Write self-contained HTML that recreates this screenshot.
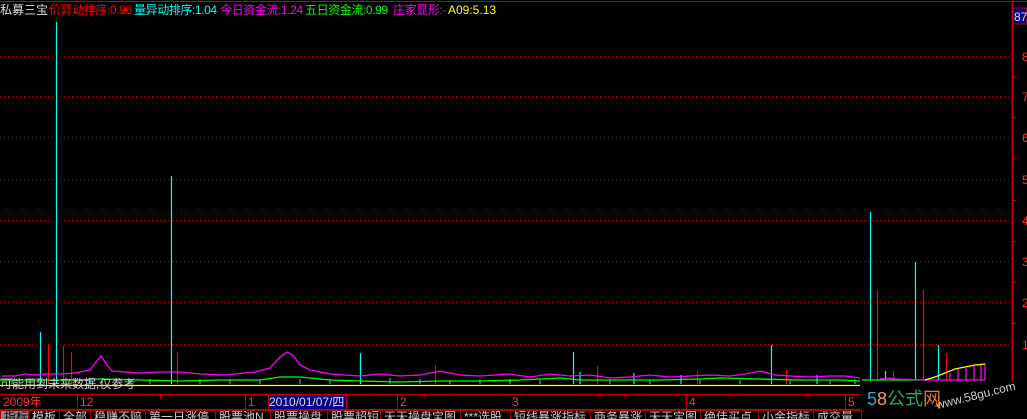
<!DOCTYPE html>
<html><head><meta charset="utf-8"><style>
body{margin:0;width:1027px;height:416px;background:#000;overflow:hidden;position:relative;font-family:"Liberation Sans","Noto Sans CJK SC",sans-serif}
.t{position:absolute;font-size:12px;white-space:nowrap;line-height:14px}
.tab{position:absolute;top:410px;height:8px;border-left:1px solid #a00;border-top:1px solid #a00;color:#ccc;font-size:12px;line-height:13px;padding-left:3px;overflow:hidden;white-space:nowrap}
</style></head><body>
<svg width="1027" height="416" style="position:absolute;left:0;top:0">
<line x1="0" y1="1.5" x2="1027" y2="1.5" stroke="#c00" stroke-width="1"/>
<g stroke="#c00" stroke-dasharray="1,3">
<line x1="0" y1="56.5" x2="1012" y2="56.5"/><line x1="0" y1="96.5" x2="1012" y2="96.5"/>
<line x1="0" y1="137.5" x2="1012" y2="137.5"/><line x1="0" y1="179.5" x2="1012" y2="179.5"/>
<line x1="0" y1="220.5" x2="1012" y2="220.5"/><line x1="0" y1="261.5" x2="1012" y2="261.5"/>
<line x1="0" y1="302.5" x2="1012" y2="302.5"/><line x1="0" y1="344.5" x2="1012" y2="344.5"/>
</g>
<line x1="1012.5" y1="2" x2="1012.5" y2="381" stroke="#c00" stroke-width="2"/>
<g stroke="#c00"><line x1="1012" y1="76.5" x2="1016" y2="76.5"/><line x1="1012" y1="117.5" x2="1016" y2="117.5"/><line x1="1012" y1="158.5" x2="1016" y2="158.5"/><line x1="1012" y1="200.5" x2="1016" y2="200.5"/><line x1="1012" y1="241.5" x2="1016" y2="241.5"/><line x1="1012" y1="282.5" x2="1016" y2="282.5"/><line x1="1012" y1="323.5" x2="1016" y2="323.5"/></g>
<g fill="#f33" font-size="12" font-family="Liberation Sans"><text x="1022" y="61">8</text><text x="1022" y="101">7</text><text x="1022" y="142">6</text><text x="1022" y="184">5</text><text x="1022" y="225">4</text><text x="1022" y="266">3</text><text x="1022" y="307">2</text><text x="1022" y="349">1</text></g>
<rect x="1013" y="8" width="14" height="16" fill="#00008b" stroke="#c00"/>
<text x="1014" y="21" fill="#ddd" font-size="12" font-family="Liberation Sans">87</text>
<g stroke="#0ff" stroke-width="1.2">
<line x1="56.5" y1="22" x2="56.5" y2="384"/><line x1="171.5" y1="176" x2="171.5" y2="384"/>
<line x1="40.5" y1="332" x2="40.5" y2="384"/><line x1="360.5" y1="353" x2="360.5" y2="384"/>
<line x1="573.5" y1="352" x2="573.5" y2="384"/><line x1="771.5" y1="345" x2="771.5" y2="384"/>
<line x1="870.5" y1="212" x2="870.5" y2="380"/><line x1="915.5" y1="262" x2="915.5" y2="380"/>
<line x1="938.5" y1="345" x2="938.5" y2="380"/><line x1="885.5" y1="371" x2="885.5" y2="380"/>
<line x1="580" y1="372" x2="580" y2="384"/><line x1="634" y1="373" x2="634" y2="384"/><line x1="681" y1="375" x2="681" y2="384"/><line x1="817" y1="375" x2="817" y2="384"/>
</g>
<g stroke="#f00" stroke-width="1.2">
<line x1="48.5" y1="344" x2="48.5" y2="384"/><line x1="63.5" y1="346" x2="63.5" y2="384"/><line x1="71.5" y1="352" x2="71.5" y2="384"/>
<line x1="177.5" y1="353" x2="177.5" y2="384"/><line x1="597.5" y1="366" x2="597.5" y2="384"/><line x1="697.5" y1="371" x2="697.5" y2="384"/><line x1="786.5" y1="370" x2="786.5" y2="384"/><line x1="435.5" y1="365" x2="435.5" y2="384"/>
<line x1="877.5" y1="290" x2="877.5" y2="380"/><line x1="923.5" y1="290" x2="923.5" y2="380"/><line x1="946.5" y1="353" x2="946.5" y2="380"/><line x1="893.5" y1="371" x2="893.5" y2="380"/>
</g>
<g stroke="#0ff" stroke-width="1" opacity="0.9">
<path d="M12 378V384M90 378V384M130 379V384M150 379V384M200 379V384M230 379V384M260 380V384M300 379V384M330 379V384M390 378V384M420 379V384M450 380V384M480 379V384M510 379V384M540 380V384M610 380V384M650 380V384M700 379V384M740 380V384M790 380V384M830 380V384M855 379V384"/>
</g>
<polyline fill="none" stroke="#f0f" stroke-width="1.3" points="2,376 15,376 25,374 35,375 45,374 60,374 75,373 90,370 96,362 101,356 107,365 112,371 125,372 140,373 160,372 180,372 200,374 225,375 255,372 270,368 280,357 287,352 293,355 300,365 310,370 330,374 360,376 380,374 400,376 420,375 440,371 460,375 480,376 510,374 530,377 550,374 570,376 590,375 610,378 630,377 650,375 670,377 690,376 710,375 730,376 745,374 760,371 775,375 790,376 810,377 830,376 845,376 860,378"/>
<polyline fill="none" stroke="#0f0" stroke-width="1.3" points="0,380 40,380 70,380 100,379 140,380 180,381 220,380 260,380 280,377 300,377 330,380 360,381 400,382 440,381 480,381 520,380 540,379 560,378 580,380 620,380 660,380 700,379 720,378 760,379 800,380 840,380 860,381"/>
<polyline fill="none" stroke="#0f0" stroke-width="1.3" points="862,380 925,380"/>
<polyline fill="none" stroke="#f0f" stroke-width="1.3" points="880,379 888,378 895,379 925,380 985,380 985,364"/>
<g stroke="#f0f" stroke-width="1.3"><path d="M950 380V373M958 380V369M966 380V368M974 380V366M981 380V365"/></g>
<polyline fill="none" stroke="#ff0" stroke-width="1.3" points="925,380 935,377 945,373 955,369 965,367 975,365 985,364"/>
<line x1="0" y1="385.5" x2="860" y2="385.5" stroke="#ff0" stroke-width="1.3"/>
<line x1="0" y1="394.5" x2="860" y2="394.5" stroke="#c00"/>
<g stroke="#c00"><path d="M77.5 394V410M245.5 394V410M397.5 394V410M686.5 394V410M845.5 394V410M160.5 395V399M340.5 395V399M425 395V399M600 395V399M625 395V399M730 395V399M808 395V399"/></g>
<line x1="0" y1="409.5" x2="860" y2="409.5" stroke="#c00"/>
</svg>
<div class="t" style="left:0;top:3px;color:#ddd">私募三宝</div>
<div class="t" style="left:49px;top:3px;color:#f00;letter-spacing:-0.4px">价异动排序:0.96</div>
<div class="t" style="left:134px;top:3px;color:#0ff;letter-spacing:-0.4px">量异动排序:1.04</div>
<div class="t" style="left:220px;top:3px;color:#f0f;letter-spacing:-0.4px">今日资金流:1.24</div>
<div class="t" style="left:305px;top:3px;color:#0f0;letter-spacing:-0.4px">五日资金流:0.99</div>
<div class="t" style="left:393px;top:3px;color:#f0f;letter-spacing:-0.4px">庄家显形:-</div>
<div class="t" style="left:448px;top:3px;color:#ff0">A09:5.13</div>
<div class="t" style="left:0;top:377px;color:#ccc">可能用到未来数据,仅参考</div>
<div class="t" style="left:3px;top:395px;color:#f33">2009年</div>
<div class="t" style="left:80px;top:395px;color:#f33">12</div>
<div class="t" style="left:248px;top:395px;color:#f33">1</div>
<div class="t" style="left:269px;top:395px;width:77px;height:14px;background:#00008b;outline:1px solid #c00;color:#ddd">2010/01/07/四</div>
<div class="t" style="left:400px;top:395px;color:#f33">2</div>
<div class="t" style="left:512px;top:395px;color:#f33">3</div>
<div class="t" style="left:689px;top:395px;color:#f33">4</div>
<div class="t" style="left:848px;top:395px;color:#f33">5</div>
<div class="tab" style="left:0;width:25px;background:#888;color:#000">指标</div>
<div class="tab" style="left:28px;width:26px">模板</div>
<div class="tab" style="left:59px;width:28px">全部</div>
<div class="tab" style="left:90px;width:52px">稳赚不赔</div>
<div class="tab" style="left:145px;width:67px">第一日涨停</div>
<div class="tab" style="left:215px;width:52px">股票池N</div>
<div class="tab" style="left:270px;width:54px">股票操盘</div>
<div class="tab" style="left:327px;width:50px">股票超短</div>
<div class="tab" style="left:380px;width:77px">天天操盘宝图</div>
<div class="tab" style="left:460px;width:47px">***选股</div>
<div class="tab" style="left:510px;width:77px">短线暴涨指标</div>
<div class="tab" style="left:590px;width:52px">商务暴涨</div>
<div class="tab" style="left:645px;width:52px">天天宝图</div>
<div class="tab" style="left:700px;width:55px">绝佳买点</div>
<div class="tab" style="left:758px;width:52px">小金指标</div>
<div class="tab" style="left:813px;width:44px;border-right:1px solid #a00">成交量</div>
<div class="t" style="left:867px;top:388px;font-size:18px;line-height:22px"><span style="color:#3ac">5</span><span style="color:#e96">8</span><span style="color:#2a6">公式</span><span style="color:#e72">网</span></div>
<div class="t" style="left:938px;top:398px;font-size:12px;color:#ccc;transform:rotate(-14deg);transform-origin:left bottom">www.58gu.com</div>
</body></html>
